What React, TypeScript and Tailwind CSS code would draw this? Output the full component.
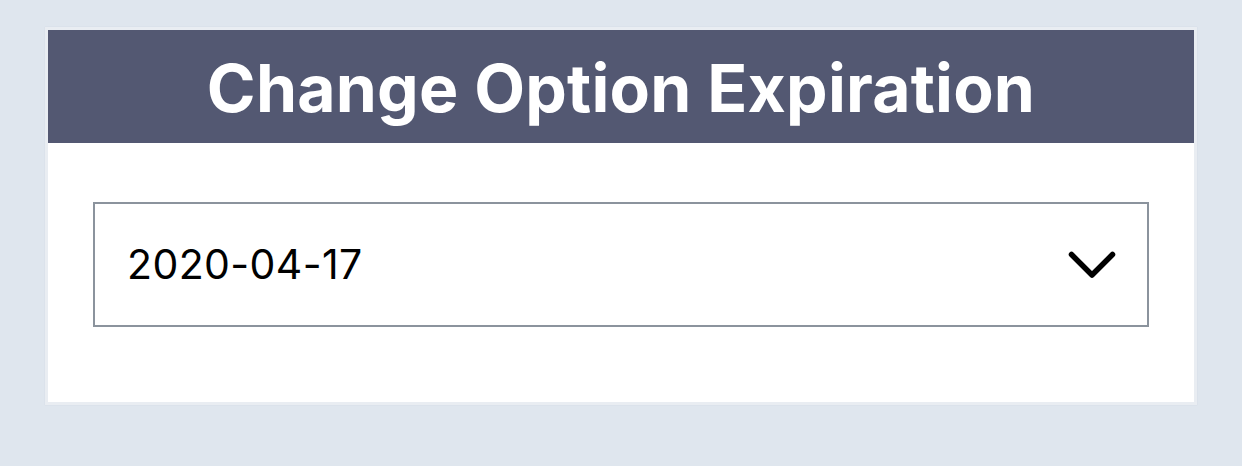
export default function App() {
  return (
    <div className="min-h-[466px] w-full bg-[#dfe6ee] pt-[27px] pl-[45px]" style={{ fontFamily: "Inter, 'Liberation Sans', sans-serif" }}>
      <div className="w-[1152px] border-[3px] border-[#e9edf2] bg-white shadow-[0_0_1px_#c8d0da]">
        {/* Header */}
        <div className="flex h-[113px] items-center justify-center bg-[#535872]">
          <h1 className="mt-[2px] text-[66px] font-bold leading-none tracking-[0.2px] text-white">Change Option Expiration</h1>
        </div>

        {/* Body */}
        <div className="px-[45px] pt-[59px] pb-[75px]">
          <div className="flex h-[125px] items-center justify-between border-2 border-[#8b939d] bg-white pl-[32px] pr-[31px]">
            <span className="text-[41px] leading-none tracking-[0.4px] text-black">2020-04-17</span>
            <svg width="48" height="28" viewBox="0 0 48 28" fill="none">
              <polyline points="3.5,3.5 24,24 44.5,3.5" stroke="#000" strokeWidth="5.5" strokeLinecap="round" strokeLinejoin="round" />
            </svg>
          </div>
        </div>
      </div>
    </div>
  );
}
